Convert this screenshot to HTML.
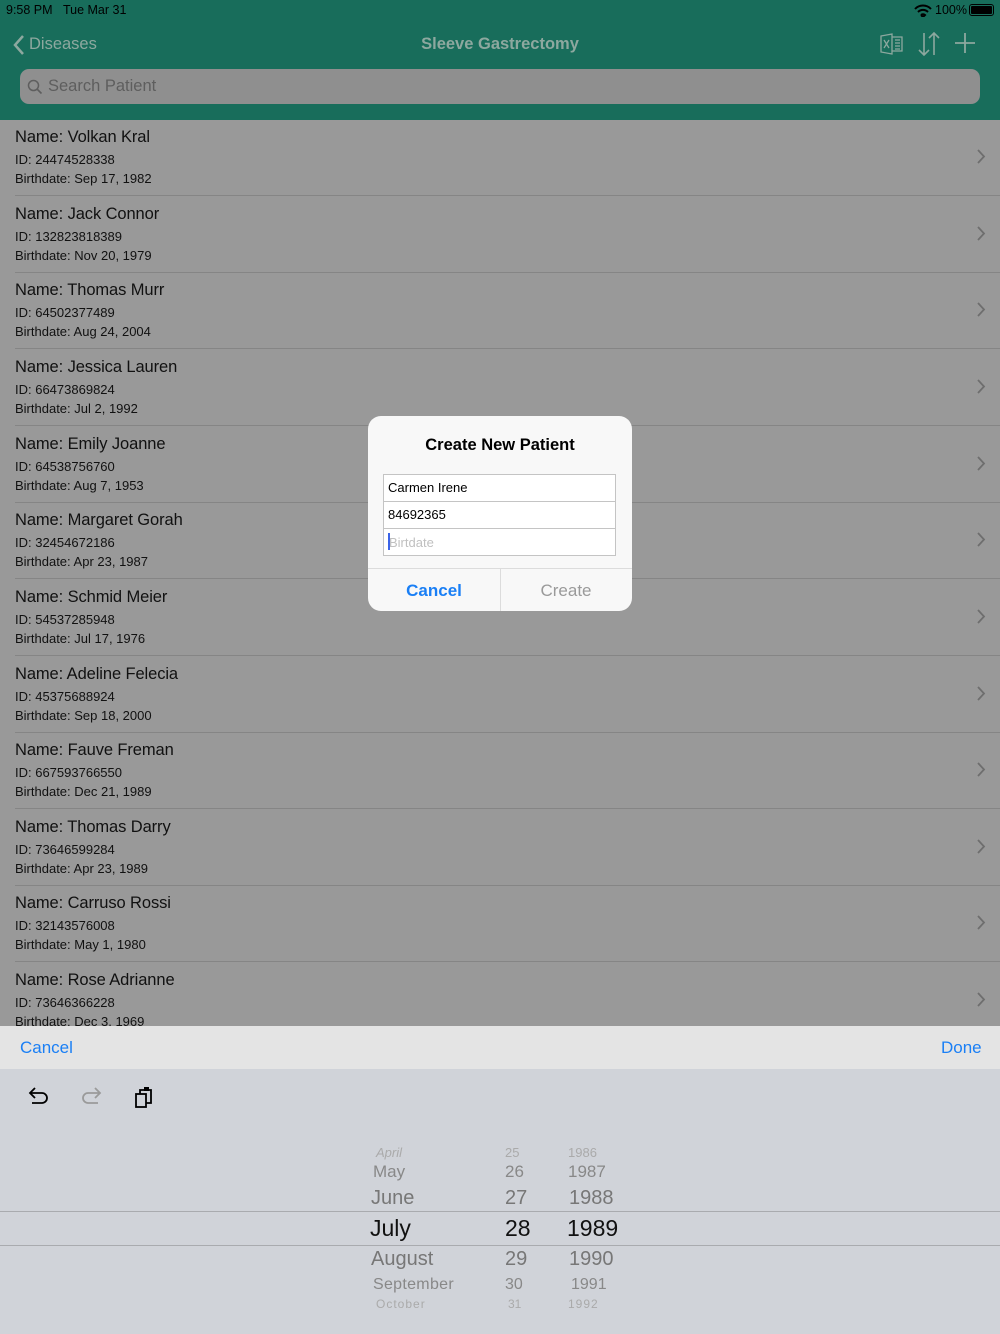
<!DOCTYPE html>
<html><head><meta charset="utf-8">
<style>
*{margin:0;padding:0;box-sizing:border-box}
body{width:1000px;height:1334px;overflow:hidden;position:relative;background:#999;font-family:"Liberation Sans",sans-serif}
.abs{position:absolute}
.nav{left:0;top:0;width:1000px;height:120px;background:#186d5b}
.row{position:absolute;left:0;width:1000px;height:77px}
.row .n{position:absolute;left:15px;top:9px;font-size:16.5px;color:#111;letter-spacing:-0.1px}
.row .i{position:absolute;left:15px;top:33px;font-size:13px;color:#111}
.row .b{position:absolute;left:15px;top:52px;font-size:13px;color:#111}
.row .sep{position:absolute;left:15px;right:0;bottom:0;height:1px;background:#858585}
.row svg{position:absolute;right:14px;top:30px}
.pk{position:absolute;font-size:20px;color:#666}
</style></head><body>
<div class="abs nav"></div>
<div class="abs" style="left:6px;top:3px;font-size:12.5px;color:#000">9:58 PM&nbsp;&nbsp;&nbsp;Tue Mar 31</div>
<svg class="abs" style="left:914px;top:4px" width="18" height="13" viewBox="0 0 18 13"><path d="M1 5a11 11 0 0 1 16 0M4 8a7 7 0 0 1 10 0M7 11l2 2 2-2a3 3 0 0 0-4 0" stroke="#000" stroke-width="2" fill="none"/></svg>
<div class="abs" style="left:935px;top:3px;font-size:12.5px;color:#000">100%</div>
<div class="abs" style="left:969px;top:4px;width:25px;height:12px;border:1px solid #000;border-radius:3px;padding:1px"><div style="width:100%;height:100%;background:#000;border-radius:1px"></div></div>
<svg class="abs" style="left:12px;top:34px" width="14" height="22" viewBox="0 0 14 22"><path d="M11 2L3 11l8 9" stroke="#8da89f" stroke-width="2.5" fill="none"/></svg>
<div class="abs" style="left:29px;top:35px;font-size:16.5px;color:#8da89f">Diseases</div>
<div class="abs" style="left:0;width:1000px;top:35px;text-align:center;font-size:16.5px;font-weight:bold;color:#8da89f">Sleeve Gastrectomy</div>
<svg class="abs" style="left:880px;top:33px" width="24" height="22" viewBox="0 0 24 22"><path d="M1 3l11-2v20L1 19z" stroke="#8da89f" fill="none" stroke-width="1.3"/><path d="M12 4h10v14H12M15 7h5M15 10h5M15 13h5M15 16h5M4 7l5 8M9 7l-5 8" stroke="#8da89f" fill="none" stroke-width="1.3"/></svg>
<svg class="abs" style="left:917px;top:31px" width="24" height="26" viewBox="0 0 24 26"><path d="M7 2v22M2 19l5 5 5-5M17 24V2M12 7l5-5 5 5" stroke="#8da89f" fill="none" stroke-width="1.6"/></svg>
<svg class="abs" style="left:954px;top:32px" width="22" height="22"><path d="M11 1v20M1 11h20" stroke="#8da89f" stroke-width="1.8"/></svg>
<div class="abs" style="left:20px;top:69px;width:960px;height:35px;background:#8f8f8f;border-radius:9px"></div>
<svg class="abs" style="left:27px;top:79px" width="16" height="16"><circle cx="6.5" cy="6.5" r="5" stroke="#5e5e5e" stroke-width="1.5" fill="none"/><path d="M10 10l4.5 4.5" stroke="#5e5e5e" stroke-width="1.6"/></svg>
<div class="abs" style="left:48px;top:77px;font-size:16.5px;color:#5e5e5e">Search Patient</div>

<div class="row" style="top:119px"><div class="n">Name: Volkan Kral</div><div class="i">ID: 24474528338</div><div class="b">Birthdate: Sep 17, 1982</div><div class="sep"></div><svg width="9" height="15"><path d="M1 1l6 6.5L1 14" stroke="#6e6e6e" stroke-width="1.8" fill="none"/></svg></div>
<div class="row" style="top:196px"><div class="n">Name: Jack Connor</div><div class="i">ID: 132823818389</div><div class="b">Birthdate: Nov 20, 1979</div><div class="sep"></div><svg width="9" height="15"><path d="M1 1l6 6.5L1 14" stroke="#6e6e6e" stroke-width="1.8" fill="none"/></svg></div>
<div class="row" style="top:272px"><div class="n">Name: Thomas Murr</div><div class="i">ID: 64502377489</div><div class="b">Birthdate: Aug 24, 2004</div><div class="sep"></div><svg width="9" height="15"><path d="M1 1l6 6.5L1 14" stroke="#6e6e6e" stroke-width="1.8" fill="none"/></svg></div>
<div class="row" style="top:349px"><div class="n">Name: Jessica Lauren</div><div class="i">ID: 66473869824</div><div class="b">Birthdate: Jul 2, 1992</div><div class="sep"></div><svg width="9" height="15"><path d="M1 1l6 6.5L1 14" stroke="#6e6e6e" stroke-width="1.8" fill="none"/></svg></div>
<div class="row" style="top:426px"><div class="n">Name: Emily Joanne</div><div class="i">ID: 64538756760</div><div class="b">Birthdate: Aug 7, 1953</div><div class="sep"></div><svg width="9" height="15"><path d="M1 1l6 6.5L1 14" stroke="#6e6e6e" stroke-width="1.8" fill="none"/></svg></div>
<div class="row" style="top:502px"><div class="n">Name: Margaret Gorah</div><div class="i">ID: 32454672186</div><div class="b">Birthdate: Apr 23, 1987</div><div class="sep"></div><svg width="9" height="15"><path d="M1 1l6 6.5L1 14" stroke="#6e6e6e" stroke-width="1.8" fill="none"/></svg></div>
<div class="row" style="top:579px"><div class="n">Name: Schmid Meier</div><div class="i">ID: 54537285948</div><div class="b">Birthdate: Jul 17, 1976</div><div class="sep"></div><svg width="9" height="15"><path d="M1 1l6 6.5L1 14" stroke="#6e6e6e" stroke-width="1.8" fill="none"/></svg></div>
<div class="row" style="top:656px"><div class="n">Name: Adeline Felecia</div><div class="i">ID: 45375688924</div><div class="b">Birthdate: Sep 18, 2000</div><div class="sep"></div><svg width="9" height="15"><path d="M1 1l6 6.5L1 14" stroke="#6e6e6e" stroke-width="1.8" fill="none"/></svg></div>
<div class="row" style="top:732px"><div class="n">Name: Fauve Freman</div><div class="i">ID: 667593766550</div><div class="b">Birthdate: Dec 21, 1989</div><div class="sep"></div><svg width="9" height="15"><path d="M1 1l6 6.5L1 14" stroke="#6e6e6e" stroke-width="1.8" fill="none"/></svg></div>
<div class="row" style="top:809px"><div class="n">Name: Thomas Darry</div><div class="i">ID: 73646599284</div><div class="b">Birthdate: Apr 23, 1989</div><div class="sep"></div><svg width="9" height="15"><path d="M1 1l6 6.5L1 14" stroke="#6e6e6e" stroke-width="1.8" fill="none"/></svg></div>
<div class="row" style="top:885px"><div class="n">Name: Carruso Rossi</div><div class="i">ID: 32143576008</div><div class="b">Birthdate: May 1, 1980</div><div class="sep"></div><svg width="9" height="15"><path d="M1 1l6 6.5L1 14" stroke="#6e6e6e" stroke-width="1.8" fill="none"/></svg></div>
<div class="row" style="top:962px"><div class="n">Name: Rose Adrianne</div><div class="i">ID: 73646366228</div><div class="b">Birthdate: Dec 3, 1969</div><svg width="9" height="15"><path d="M1 1l6 6.5L1 14" stroke="#6e6e6e" stroke-width="1.8" fill="none"/></svg></div>

<!-- dialog -->
<div class="abs" style="left:368px;top:416px;width:264px;height:195px;background:#f8f8f8;border-radius:13px;overflow:hidden">
<div class="abs" style="left:0;width:264px;top:20px;text-align:center;font-size:16.5px;font-weight:bold;color:#000">Create New Patient</div>
<div class="abs" style="left:15px;top:58px;width:233px;height:82px;border:1px solid #c4c4c4;background:#fff"></div>
<div class="abs" style="left:15px;top:85px;width:233px;height:1px;background:#c4c4c4"></div>
<div class="abs" style="left:15px;top:112px;width:233px;height:1px;background:#c4c4c4"></div>
<div class="abs" style="left:20px;top:64px;font-size:13px;color:#000">Carmen Irene</div>
<div class="abs" style="left:20px;top:91px;font-size:13px;color:#000">84692365</div>
<div class="abs" style="left:20px;top:117px;width:2px;height:17px;background:#3a63e8"></div>
<div class="abs" style="left:21px;top:119px;font-size:13px;color:#c0c0c0">Birtdate</div>
<div class="abs" style="left:0;top:152px;width:264px;height:1px;background:#dcdcdc"></div>
<div class="abs" style="left:132px;top:152px;width:1px;height:43px;background:#dcdcdc"></div>
<div class="abs" style="left:0;width:132px;top:165px;text-align:center;font-size:17px;font-weight:bold;color:#1a7ff5">Cancel</div>
<div class="abs" style="left:132px;width:132px;top:165px;text-align:center;font-size:17px;color:#9a9a9a">Create</div>
</div>

<!-- picker -->
<div class="abs" style="left:0;top:1026px;width:1000px;height:43px;background:#e4e4e4"></div>
<div class="abs" style="left:20px;top:1038px;font-size:17px;color:#1a7ff5">Cancel</div>
<div class="abs" style="left:941px;top:1038px;font-size:17px;color:#1a7ff5">Done</div>
<div class="abs" style="left:0;top:1069px;width:1000px;height:265px;background:#d0d3d9"></div>
<svg class="abs" style="left:27px;top:1085px" width="24" height="24" viewBox="0 0 24 24"><path d="M4 8h11a5 5 0 0 1 0 10H5" stroke="#000" stroke-width="1.8" fill="none"/><path d="M8 3L3 8l5 5" stroke="#000" stroke-width="1.8" fill="none"/></svg>
<svg class="abs" style="left:79px;top:1085px" width="24" height="24" viewBox="0 0 24 24"><path d="M20 8H9a5 5 0 0 0 0 10h10" stroke="#9a9a9a" stroke-width="1.8" fill="none"/><path d="M16 3l5 5-5 5" stroke="#9a9a9a" stroke-width="1.8" fill="none"/></svg>
<svg class="abs" style="left:133px;top:1085px" width="22" height="24" viewBox="0 0 22 24"><rect x="3" y="9" width="10" height="13" stroke="#000" stroke-width="1.8" fill="none"/><path d="M7 9V5h11v13h-5" stroke="#000" stroke-width="1.8" fill="none"/><rect x="11" y="2" width="5" height="4" fill="#000"/></svg>
<div class="abs" style="left:0;top:1211px;width:1000px;height:1px;background:#a9abaf"></div>
<div class="abs" style="left:0;top:1245px;width:1000px;height:1px;background:#a9abaf"></div>
<div class="pk" style="left:376px;top:1145px;font-size:13px;color:#aaa;font-style:italic">April</div>
<div class="pk" style="left:505px;top:1145px;font-size:13px;color:#aaa">25</div>
<div class="pk" style="left:568px;top:1145px;font-size:13px;color:#aaa">1986</div>
<div class="pk" style="left:373px;top:1162px;font-size:17px;color:#888">May</div>
<div class="pk" style="left:505px;top:1162px;font-size:17px;color:#888">26</div>
<div class="pk" style="left:568px;top:1162px;font-size:17px;color:#888">1987</div>
<div class="pk" style="left:371px;top:1187px;color:#777">June</div>
<div class="pk" style="left:505px;top:1187px;color:#777">27</div>
<div class="pk" style="left:569px;top:1187px;color:#777">1988</div>
<div class="pk" style="left:370px;top:1215px;font-size:23px;color:#111">July</div>
<div class="pk" style="left:505px;top:1215px;font-size:23px;color:#111">28</div>
<div class="pk" style="left:567px;top:1215px;font-size:23px;color:#111">1989</div>
<div class="pk" style="left:371px;top:1248px;color:#777">August</div>
<div class="pk" style="left:505px;top:1248px;color:#777">29</div>
<div class="pk" style="left:569px;top:1248px;color:#777">1990</div>
<div class="pk" style="left:373px;top:1276px;font-size:16px;color:#888;letter-spacing:0.3px">September</div>
<div class="pk" style="left:505px;top:1276px;font-size:16px;color:#888">30</div>
<div class="pk" style="left:571px;top:1276px;font-size:16px;color:#888">1991</div>
<div class="pk" style="left:376px;top:1297px;font-size:12px;color:#aaa;letter-spacing:1px">October</div>
<div class="pk" style="left:508px;top:1297px;font-size:12px;color:#aaa">31</div>
<div class="pk" style="left:568px;top:1297px;font-size:12px;color:#aaa;letter-spacing:1px">1992</div>
</body></html>
